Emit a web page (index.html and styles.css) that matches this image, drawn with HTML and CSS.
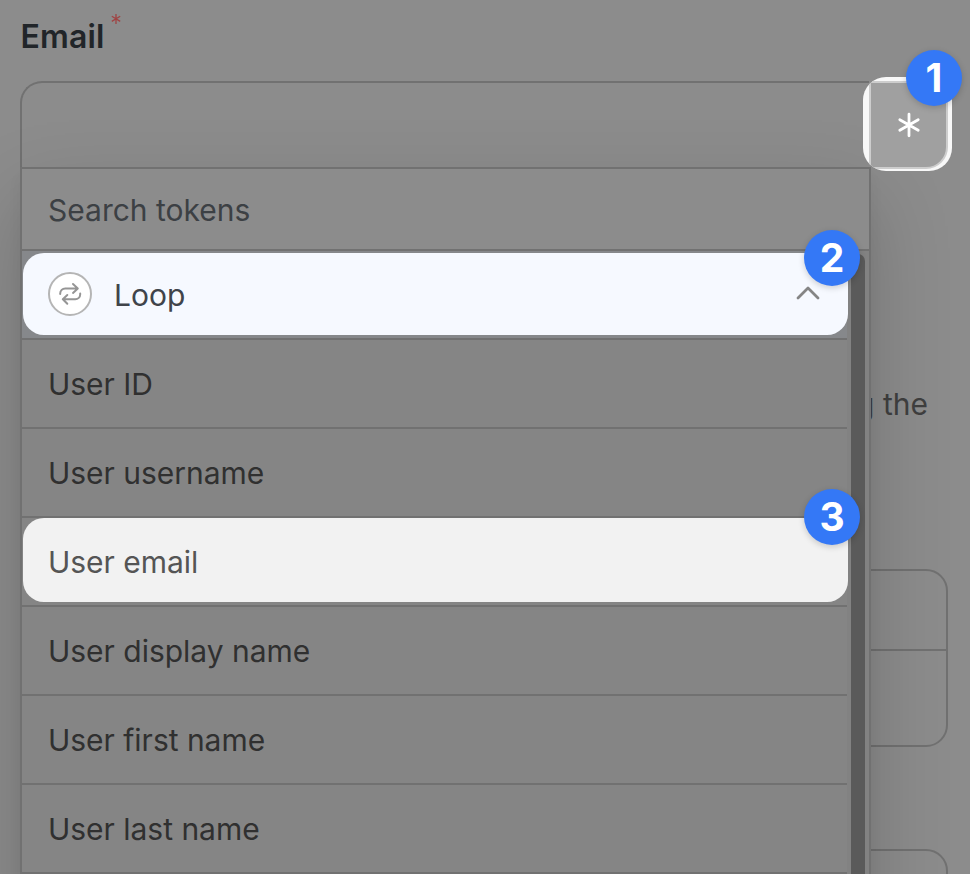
FILE: index.html
```html
<!DOCTYPE html>
<html lang="en">
<head>
<meta charset="utf-8">
<title>Email token picker</title>
<link rel="stylesheet" href="styles.css">
</head>
<body>
<main class="page">
  <label class="label"><span class="label-text">Email</span><svg class="required" viewBox="0 0 10 12"><path d="M5 1v10M.8 3.3l8.4 5.1M9.2 3.3L.8 8.4"/></svg></label>
  <div class="field">
    <div class="input"></div>
    <div class="token">
      <div class="ring">
        <button class="token-button">
          <svg class="asterisk" viewBox="0 0 24 26"><path d="M12 2.2v21.6M2.8 7.7l18.4 10.6M21.2 7.7L2.8 18.3"/></svg>
        </button>
      </div>
      <span class="badge">1</span>
    </div>
    <section class="menu">
      <div class="search">Search tokens</div>
      <div class="scroll">
        <div class="list">
          <div class="row group">
            <div class="highlight">
              <span class="loop-icon"><svg viewBox="0 0 24 24"><path d="M2.2 12v-.6a5 5 0 0 1 5-5h12.4M15 2l4.8 4.4-4.8 4.5M22.2 11.6v.6a5 5 0 0 1-5 5H4.8M9.3 13L4.8 17.2l4.5 4.5"/></svg></span>
              <span class="loop-text">Loop</span>
              <svg class="chevron" viewBox="0 0 24 14"><path d="M2 12L12 2l10 10"/></svg>
              <span class="badge">2</span>
            </div>
          </div>
          <div class="row"><span>User ID</span></div>
          <div class="row"><span>User username</span></div>
          <div class="row selected">
            <div class="highlight"><span>User email</span><span class="badge">3</span></div>
          </div>
          <div class="row"><span>User display name</span></div>
          <div class="row"><span>User first name</span></div>
          <div class="row"><span>User last name</span></div>
        </div>
        <div class="track"><div class="thumb"></div></div>
      </div>
    </section>
  </div>
  <p class="help">using the</p>
  <div class="card"><div class="card-top"></div></div>
  <div class="card next"></div>
</main>
</body>
</html>
```
FILE: styles.css
```css
* { box-sizing: border-box; }
body {
  margin: 0;
  background: #8c8c8c;
  font-family: Inter, "Liberation Sans", sans-serif;
  font-size: 30px;
  line-height: 36px;
  color: #303030;
}
.page { height: 874px; overflow: hidden; padding: 0 22px 0 20px; }
.label { display: flex; height: 81px; color: #212529; }
.label-text { padding: 19px 0 0 .5px; font-size: 32px; font-weight: 600; letter-spacing: .15px; }
.required { width: 10px; height: 12px; margin: 13px 0 0 6px; fill: none; stroke: #a04343; stroke-width: 1.3; }
.field { position: relative; display: flex; height: 88px; }
.input { flex: none; width: 849px; border: 2px solid #717171; border-right: 0; border-radius: 22px 0 0 0; }
.token { position: relative; z-index: 3; flex: none; width: 90px; height: 94px; margin: -4.5px 0 0 -6.5px; }
.ring {
  display: flex;
  width: 89.5px;
  height: 94px;
  padding: 4.5px 4px 1.5px 6.5px;
  border-radius: 23px;
  overflow: hidden;
  background: #f8f8f8;
}
.token-button {
  display: flex;
  align-items: center;
  justify-content: center;
  width: 79px;
  height: 88px;
  padding: 0;
  border: 2px solid #cdcdcd;
  border-radius: 0 0 22px 0;
  background: #a0a0a0;
}
.asterisk { width: 24px; height: 26px; fill: none; stroke: #fff; stroke-width: 2.8; stroke-linecap: round; }
.badge {
  position: absolute;
  top: -23px;
  right: -12px;
  width: 56px;
  height: 56px;
  padding-left: 1px;
  border-radius: 50%;
  background: #3478f6;
  box-shadow: 0 2px 6px rgba(0, 0, 0, .18);
  color: #fff;
  font-size: 39px;
  font-weight: 700;
  line-height: 55px;
  text-align: center;
}
.token .badge { top: -26.5px; right: -9.5px; padding: 0; }
.menu {
  position: absolute;
  z-index: 2;
  top: 86px;
  left: 0;
  width: 851px;
  height: 760px;
  border: 2px solid #717171;
  background: #8c8c8c;
  box-shadow: 0 32px 76px rgba(0, 0, 0, .18), 0 10px 14px rgba(0, 0, 0, .045);
}
.search { height: 82px; padding: 23px 0 0 26px; border-bottom: 2px solid #717171; color: #3c4044; }
.scroll { display: flex; height: 676px; }
.list { width: 825px; background: #858585; letter-spacing: -.02px; }
.row { height: 89px; padding: 26px 0 0 26px; border-bottom: 2px solid #717171; }
.group { padding: 2px 0 0 .5px; background: #86888b; }
.selected { padding: 0 0 0 .5px; }
.highlight { position: relative; display: flex; width: 825px; border-radius: 21px; }
.group .highlight { height: 82px; align-items: center; background: #f6f9ff; color: #40444a; }
.selected .highlight { height: 84px; padding: 26px 0 0 25.5px; background: #f2f2f2; color: #555; }
.selected .badge { top: -29px; }
.loop-icon { display: flex; align-items: center; justify-content: center; width: 44px; height: 44px; margin-left: 25.5px; border: 2px solid #b5b5b5; border-radius: 50%; background: #fff; }
.loop-icon svg { width: 24px; height: 24px; fill: none; stroke: #959595; stroke-width: 2; stroke-linecap: round; stroke-linejoin: round; }
.loop-text { margin: 1px 0 0 22px; }
.chevron { width: 24px; height: 14px; margin: -2px 28px 0 auto; fill: none; stroke: #858585; stroke-width: 2.8; stroke-linecap: round; stroke-linejoin: round; }
.track { width: 22px; padding: 3px 4px 0; background: #828282; }
.thumb { width: 14px; height: 673px; border-radius: 7px 7px 0 0; background: #5a5a5a; }
.help { height: 36px; margin: 217px 20px 0 0; text-align: right; color: #3f3f3f; }
.card { height: 178px; margin-top: 147px; border: 2px solid #717171; border-radius: 22px; }
.card-top { height: 80px; border-bottom: 2px solid #717171; }
.next { margin-top: 102px; }
```
